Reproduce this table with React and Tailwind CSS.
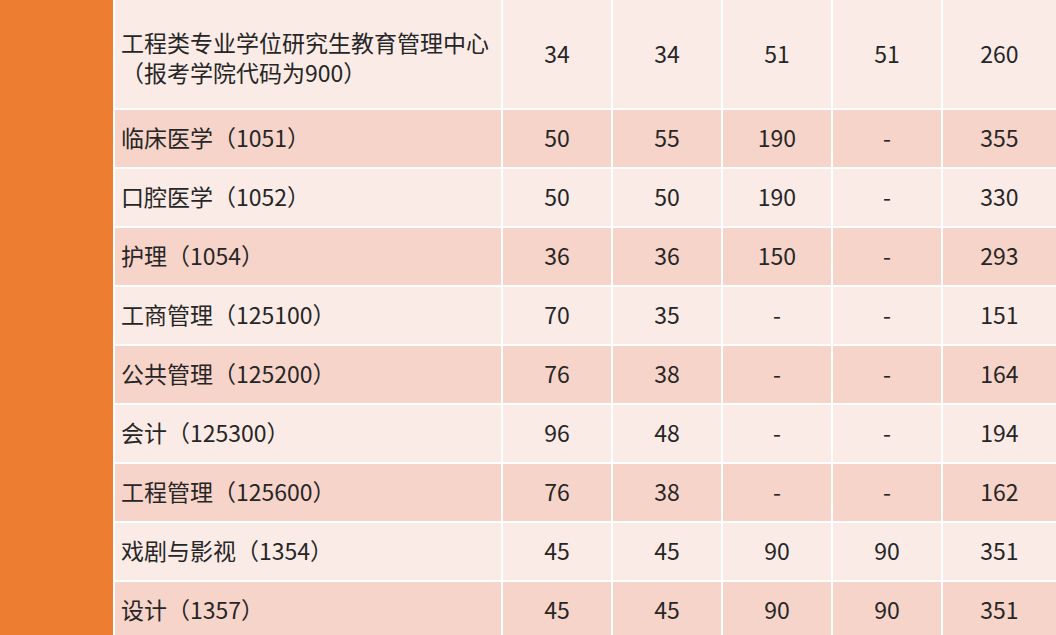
const rows = [
  { name: ["工程类专业学位研究生教育管理中心", "（报考学院代码为900）"], vals: ["34", "34", "51", "51", "260"] },
  { name: ["临床医学（1051）"], vals: ["50", "55", "190", "-", "355"] },
  { name: ["口腔医学（1052）"], vals: ["50", "50", "190", "-", "330"] },
  { name: ["护理（1054）"], vals: ["36", "36", "150", "-", "293"] },
  { name: ["工商管理（125100）"], vals: ["70", "35", "-", "-", "151"] },
  { name: ["公共管理（125200）"], vals: ["76", "38", "-", "-", "164"] },
  { name: ["会计（125300）"], vals: ["96", "48", "-", "-", "194"] },
  { name: ["工程管理（125600）"], vals: ["76", "38", "-", "-", "162"] },
  { name: ["戏剧与影视（1354）"], vals: ["45", "45", "90", "90", "351"] },
  { name: ["设计（1357）"], vals: ["45", "45", "90", "90", "351"] },
];

function App() {
  return (
    <div
      className="flex h-[635px] w-[1056px] overflow-hidden bg-white text-[#262626]"
      style={{ fontFamily: '"Noto Sans CJK SC", "Noto Sans", sans-serif' }}
    >
      <div className="w-[113px] shrink-0 bg-[#ed7d31]"></div>
      <div className="ml-[2px] grid flex-1 grid-cols-[386px_108px_108px_108px_108px_1fr] grid-rows-[108px_repeat(9,57px)] gap-[2px] content-start">
        {rows.map((row, i) => {
          const bg = i % 2 === 0 ? "bg-[#fbebe6]" : "bg-[#f7d4c9]";
          return (
            <div key={i} className="contents">
              <div className={`${bg} ${i === 0 ? "pt-[6px]" : "pb-[4px]"} flex flex-col justify-center pl-[6px] text-[23px] leading-[30px]`}>
                {row.name.map((line) => (
                  <span key={line} className="whitespace-nowrap">{line}</span>
                ))}
              </div>
              {row.vals.map((v, j) => (
                <div key={j} className={`${bg} ${i === 0 ? "pb-[2px]" : "pb-[2px]"} flex items-center justify-center text-[23px]`}>
                  {v}
                </div>
              ))}
            </div>
          );
        })}
      </div>
    </div>
  );
}

export default App;
